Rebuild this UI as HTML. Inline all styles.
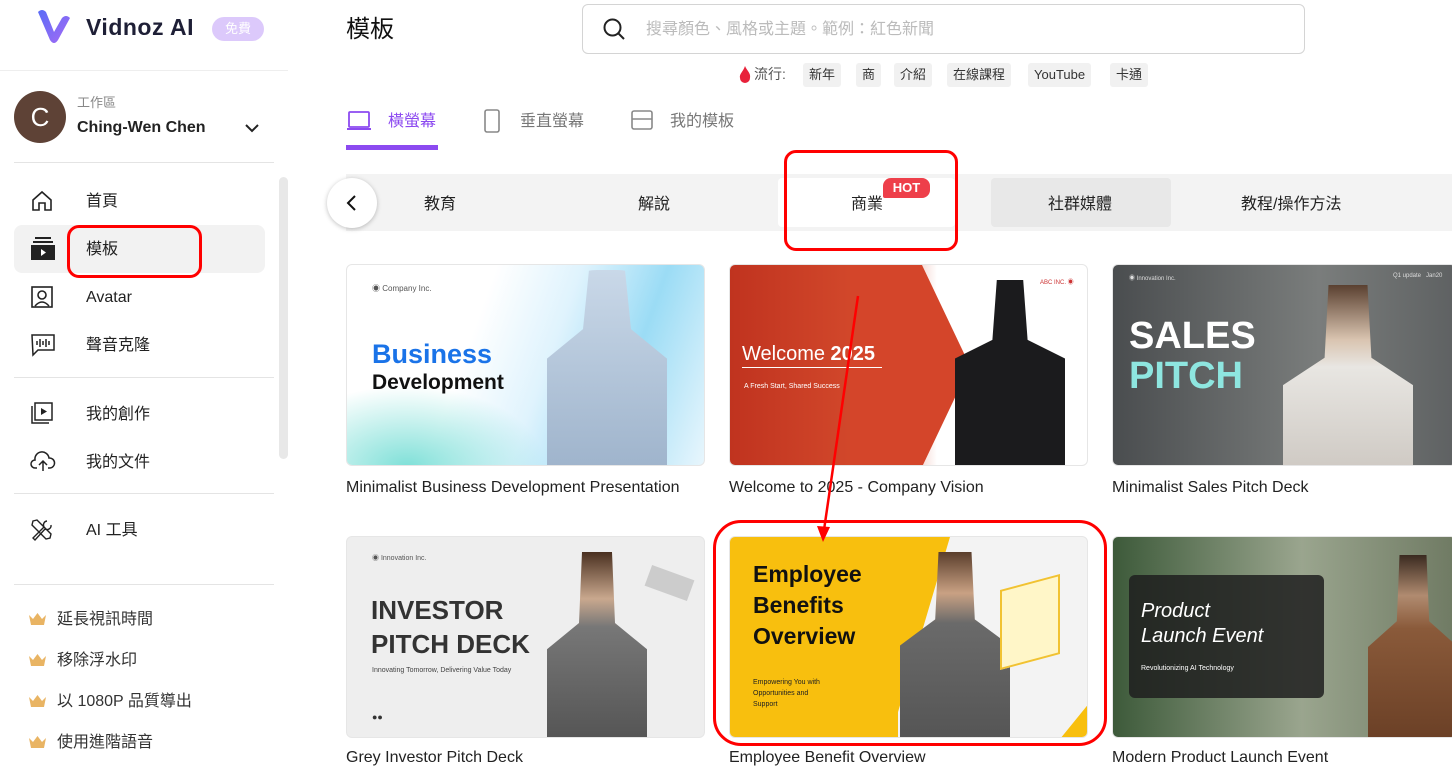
<!DOCTYPE html>
<html><head><meta charset="utf-8"><style>
*{margin:0;padding:0;box-sizing:border-box}
body{width:1452px;height:762px;overflow:hidden;background:#fff;font-family:"Liberation Sans","Noto Sans CJK TC",sans-serif;color:#222;position:relative}
.a{position:absolute}
.nav{position:absolute;left:86px;font-size:16px;color:#222}
.ic{position:absolute;left:30px}
.hr{position:absolute;left:14px;width:260px;height:1px;background:#e4e4e4}
.crown{position:absolute;left:29px;width:17px;height:12px}
.prem{position:absolute;left:57px;font-size:16px;color:#333}
.chip{position:absolute;top:63px;height:24px;background:#f1f1f1;border-radius:3px;font-size:13px;color:#333;line-height:24px;padding:0 6px}
.card{position:absolute;width:359px;height:202px;border-radius:6px;overflow:hidden;border:1px solid #e6e6e6}
.ttl{position:absolute;font-size:16px;color:#222}
.tab{position:absolute;top:190px;font-size:16px;color:#222}
.redbox{position:absolute;border:3px solid #f00;border-radius:12px}
</style></head><body>
<!-- sidebar -->
<svg class="a" style="left:36px;top:8px" width="36" height="38" viewBox="0 0 36 38"><defs><linearGradient id="lg" x1="0" y1="0" x2="1" y2="1"><stop offset="0" stop-color="#5a6cf6"/><stop offset="1" stop-color="#a56bf5"/></linearGradient></defs><path d="M2 4 L14 32 Q18 38 22 32 L34 10 Q30 6 26 10 L18 24 L10 4 Q6 0 2 4Z" fill="url(#lg)"/></svg>
<div class="a" style="left:86px;top:14px;font-size:23px;font-weight:bold;color:#1e1f36;letter-spacing:0.5px">Vidnoz AI</div>
<div class="a" style="left:212px;top:17px;width:52px;height:24px;border-radius:12px;background:#dcc9fb;color:#fff;font-size:13px;text-align:center;line-height:24px">免費</div>
<div class="a" style="left:0;top:70px;width:288px;height:1px;background:#eee"></div>
<div class="a" style="left:14px;top:91px;width:52px;height:52px;border-radius:50%;background:#5e4236;color:#fff;font-size:26px;text-align:center;line-height:52px">C</div>
<div class="a" style="left:77px;top:92px;font-size:13px;color:#888">工作區</div>
<div class="a" style="left:77px;top:119px;font-size:16px;font-weight:bold;color:#222">Ching-Wen Chen</div>
<svg class="a" style="left:244px;top:122px" width="16" height="12"><path d="M2 3 L8 9 L14 3" stroke="#222" stroke-width="2" fill="none"/></svg>
<div class="hr" style="top:162px"></div>
<div class="a" style="left:279px;top:177px;width:9px;height:282px;border-radius:5px;background:#e8e8e8"></div>
<svg class="ic" style="top:189px" width="24" height="24"><path d="M3 11 L12 3 L21 11 V21 H15 V14 H9 V21 H3Z" stroke="#222" stroke-width="1.6" fill="none"/></svg>
<div class="nav" style="top:187px">首頁</div>
<div class="a" style="left:14px;top:225px;width:251px;height:48px;border-radius:8px;background:#f2f2f2"></div>
<svg class="ic" style="top:236px" width="26" height="26"><rect x="5" y="1" width="16" height="2" fill="#222"/><rect x="3" y="5" width="20" height="2" fill="#222"/><rect x="1" y="9" width="24" height="15" fill="#222"/><path d="M11 13 L16 16.5 L11 20Z" fill="#fff"/></svg>
<div class="nav" style="top:235px">模板</div>
<svg class="ic" style="top:285px" width="24" height="24"><rect x="2" y="2" width="20" height="20" stroke="#222" stroke-width="1.6" fill="none"/><circle cx="12" cy="10" r="4" stroke="#222" stroke-width="1.6" fill="none"/><path d="M5 21 Q12 13 19 21" stroke="#222" stroke-width="1.6" fill="none"/></svg>
<div class="nav" style="top:289px">Avatar</div>
<svg class="ic" style="top:333px" width="26" height="24"><path d="M2 2 H24 V17 H8 L3 22 Z" stroke="#222" stroke-width="1.5" fill="none"/><path d="M7 8v4M10 6v8M13 8v4M16 6v8M19 8v4" stroke="#222" stroke-width="1.5"/></svg>
<div class="nav" style="top:331px">聲音克隆</div>
<div class="hr" style="top:377px"></div>
<svg class="ic" style="top:401px" width="24" height="24"><rect x="5" y="2" width="17" height="17" stroke="#222" stroke-width="1.5" fill="none"/><path d="M2 5 V22 H19" stroke="#222" stroke-width="1.5" fill="none"/><path d="M11 7 L17 10.5 L11 14Z" fill="#222"/></svg>
<div class="nav" style="top:400px">我的創作</div>
<svg class="ic" style="top:449px" width="26" height="24"><path d="M7 19 H5 A4 4 0 0 1 5 11 A7 7 0 0 1 19 9 A5 5 0 0 1 20 19 H18" stroke="#222" stroke-width="1.5" fill="none"/><path d="M13 22 V12 M9 16 L13 12 L17 16" stroke="#222" stroke-width="1.5" fill="none"/></svg>
<div class="nav" style="top:448px">我的文件</div>
<div class="hr" style="top:493px"></div>
<svg class="ic" style="top:518px" width="24" height="24"><path d="M3 3 L7 2 L21 16 L20 20 L16 21 L2 7 Z M17 3 A4 4 0 0 0 14 9 L3 20 L5 22 L15 11 A4 4 0 0 0 21 7" stroke="#222" stroke-width="1.4" fill="none"/></svg>
<div class="nav" style="top:516px">AI 工具</div>
<div class="hr" style="top:584px"></div>
<svg class="crown" style="top:613px" viewBox="0 0 17 12"><path d="M0 2 L4 6 L8.5 0 L13 6 L17 2 L15 12 H2Z" fill="#e9b463"/></svg>
<div class="prem" style="top:605px">延長視訊時間</div>
<svg class="crown" style="top:654px" viewBox="0 0 17 12"><path d="M0 2 L4 6 L8.5 0 L13 6 L17 2 L15 12 H2Z" fill="#e9b463"/></svg>
<div class="prem" style="top:646px">移除浮水印</div>
<svg class="crown" style="top:695px" viewBox="0 0 17 12"><path d="M0 2 L4 6 L8.5 0 L13 6 L17 2 L15 12 H2Z" fill="#e9b463"/></svg>
<div class="prem" style="top:687px">以 1080P 品質導出</div>
<svg class="crown" style="top:736px" viewBox="0 0 17 12"><path d="M0 2 L4 6 L8.5 0 L13 6 L17 2 L15 12 H2Z" fill="#e9b463"/></svg>
<div class="prem" style="top:728px">使用進階語音</div>
<div class="redbox" style="left:67px;top:225px;width:135px;height:53px"></div>

<!-- header -->
<div class="a" style="left:346px;top:9px;font-size:24px;color:#111">模板</div>
<div class="a" style="left:582px;top:4px;width:723px;height:50px;border:1px solid #d4d4d4;border-radius:6px"></div>
<svg class="a" style="left:602px;top:17px" width="24" height="24"><circle cx="10.5" cy="10.5" r="8" stroke="#222" stroke-width="2" fill="none"/><path d="M16.5 16.5 L22 22" stroke="#222" stroke-width="2"/></svg>
<div class="a" style="left:646px;top:15px;font-size:16px;color:#bbb">搜尋顏色、風格或主題。範例：紅色新聞</div>
<svg class="a" style="left:739px;top:66px" width="12" height="18"><path d="M6 0 C8 5 12 7 11 12 A5 5 0 0 1 1 12 C0 8 4 6 6 0Z" fill="#e8213a"/></svg>
<div class="a" style="left:754px;top:64px;font-size:14px;color:#555">流行:</div>
<div class="chip" style="left:803px">新年</div>
<div class="chip" style="left:856px">商</div>
<div class="chip" style="left:894px">介紹</div>
<div class="chip" style="left:947px">在線課程</div>
<div class="chip" style="left:1028px">YouTube</div>
<div class="chip" style="left:1110px">卡通</div>
<svg class="a" style="left:346px;top:110px" width="26" height="22"><rect x="3" y="2" width="20" height="15" stroke="#8c4af0" stroke-width="1.8" fill="none" rx="1"/><path d="M1 19 H25" stroke="#8c4af0" stroke-width="2"/></svg>
<div class="a" style="left:388px;top:107px;font-size:16px;color:#8c4af0">橫螢幕</div>
<div class="a" style="left:346px;top:145px;width:92px;height:5px;background:#8c4af0"></div>
<svg class="a" style="left:482px;top:108px" width="20" height="26"><rect x="3" y="2" width="14" height="22" rx="2" stroke="#888" stroke-width="1.6" fill="none"/></svg>
<div class="a" style="left:520px;top:107px;font-size:16px;color:#777">垂直螢幕</div>
<svg class="a" style="left:630px;top:109px" width="24" height="22"><rect x="2" y="2" width="20" height="18" rx="2" stroke="#888" stroke-width="1.6" fill="none"/><path d="M2 10 H22" stroke="#888" stroke-width="1.6"/></svg>
<div class="a" style="left:670px;top:107px;font-size:16px;color:#777">我的模板</div>

<!-- category tabs -->
<div class="a" style="left:346px;top:174px;width:1106px;height:57px;background:#f3f3f3"></div>
<div class="a" style="left:778px;top:178px;width:177px;height:49px;background:#fff;border-radius:4px"></div>
<div class="a" style="left:991px;top:178px;width:180px;height:49px;background:#e8e8e8;border-radius:4px"></div>
<div class="a" style="left:327px;top:178px;width:50px;height:50px;border-radius:50%;background:#fff;box-shadow:0 1px 5px rgba(0,0,0,.25)"></div>
<svg class="a" style="left:344px;top:194px" width="14" height="18"><path d="M11 2 L4 9 L11 16" stroke="#111" stroke-width="2" fill="none"/></svg>
<div class="tab" style="left:424px">教育</div>
<div class="tab" style="left:638px">解說</div>
<div class="tab" style="left:851px">商業</div>
<div class="a" style="left:883px;top:178px;width:47px;height:20px;background:#ee3f4a;border-radius:8px 8px 8px 2px;color:#fff;font-size:13px;font-weight:bold;text-align:center;line-height:20px">HOT</div>
<div class="tab" style="left:1048px">社群媒體</div>
<div class="tab" style="left:1241px">教程/操作方法</div>
<div class="redbox" style="left:784px;top:150px;width:174px;height:101px"></div>

<!-- cards row 1 -->
<div class="card" style="left:346px;top:264px;background:linear-gradient(110deg,#fff 0%,#fff 35%,#dff3fd 55%,#9bdcf5 75%,#e8f6fd 100%)">
 <div class="a" style="left:0;top:120px;width:200px;height:82px;background:radial-gradient(ellipse at 30% 100%,#7fe0d8 0%,rgba(255,255,255,0) 70%)"></div>
 <div class="a" style="left:25px;top:18px;font-size:8px;color:#555">◉ Company Inc.</div>
 <div class="a" style="left:25px;top:74px;font-size:27px;font-weight:bold;color:#1a73e8">Business</div>
 <div class="a" style="left:25px;top:106px;font-size:21px;font-weight:bold;color:#111">Development</div>
 <div class="a" style="left:200px;top:5px;width:120px;height:197px;background:linear-gradient(#c9d8e8,#9fb4cc);border-radius:50px 50px 0 0;clip-path:polygon(35% 0,65% 0,70% 30%,100% 45%,100% 100%,0 100%,0 45%,30% 30%)"></div>
</div>
<div class="ttl" style="left:346px;top:479px">Minimalist Business Development Presentation</div>
<div class="card" style="left:729px;top:264px;background:linear-gradient(90deg,#c0331f 0%,#d2482b 35%,#fff 58%,#fff 100%)">
 <div class="a" style="left:120px;top:0;width:120px;height:202px;background:#d4452a;clip-path:polygon(0 0,60% 0,100% 50%,60% 100%,0 100%)"></div>
 <div class="a" style="left:12px;top:78px;font-size:20px;color:#fff">Welcome <b>2025</b></div>
 <div class="a" style="left:12px;top:102px;width:140px;height:1px;background:#fff"></div>
 <div class="a" style="left:14px;top:118px;font-size:7px;color:#fff">A Fresh Start, Shared Success</div>
 <div class="a" style="left:310px;top:12px;font-size:6px;color:#c33">ABC INC. ◉</div>
 <div class="a" style="left:225px;top:15px;width:110px;height:187px;background:#1b1b1d;clip-path:polygon(38% 0,62% 0,66% 32%,100% 42%,100% 100%,0 100%,0 42%,34% 32%)"></div>
</div>
<div class="ttl" style="left:729px;top:479px">Welcome to 2025 - Company Vision</div>
<div class="card" style="left:1112px;top:264px;width:345px;background:linear-gradient(90deg,#4a4d4f,#7a7d7c 60%,#5e6162)">
 <div class="a" style="left:16px;top:8px;font-size:6px;color:#ddd">◉ Innovation Inc.</div>
 <div class="a" style="left:280px;top:8px;font-size:6px;color:#ddd">Q1 update &nbsp; Jan20</div>
 <div class="a" style="left:16px;top:50px;font-size:38px;font-weight:bold;color:#fff">SALES</div>
 <div class="a" style="left:16px;top:90px;font-size:38px;font-weight:bold;color:#8ee6e0">PITCH</div>
 <div class="a" style="left:170px;top:20px;width:130px;height:182px;background:linear-gradient(#5a4030 0,#d9c4b0 30%,#e8e6e2 45%,#cfcac4 100%);clip-path:polygon(35% 0,65% 0,68% 40%,100% 55%,100% 100%,0 100%,0 55%,32% 40%)"></div>
</div>
<div class="ttl" style="left:1112px;top:479px">Minimalist Sales Pitch Deck</div>

<!-- cards row 2 -->
<div class="card" style="left:346px;top:536px;background:#eeeeee">
 <div class="a" style="left:25px;top:16px;font-size:7px;color:#555">◉ Innovation Inc.</div>
 <div class="a" style="left:24px;top:58px;font-size:26px;font-weight:bold;color:#333">INVESTOR</div>
 <div class="a" style="left:24px;top:92px;font-size:26px;font-weight:bold;color:#333">PITCH DECK</div>
 <div class="a" style="left:25px;top:130px;font-size:7px;color:#444">Innovating Tomorrow, Delivering Value Today</div>
 <div class="a" style="left:25px;top:175px;font-size:9px;color:#333">●●</div>
 <div class="a" style="left:200px;top:15px;width:100px;height:187px;background:linear-gradient(#4a3020 0,#c9a88e 25%,#777 40%,#555 100%);clip-path:polygon(35% 0,65% 0,68% 38%,100% 52%,100% 100%,0 100%,0 52%,32% 38%)"></div>
 <div class="a" style="left:300px;top:35px;width:45px;height:22px;background:#ccc;transform:rotate(20deg)"></div>
</div>
<div class="ttl" style="left:346px;top:749px">Grey Investor Pitch Deck</div>
<div class="card" style="left:729px;top:536px;background:linear-gradient(90deg,#f8bf0e 0,#f8bf0e 47%,#f3f3f3 47%)">
 <div class="a" style="left:140px;top:0;width:80px;height:202px;background:#f8bf0e;clip-path:polygon(0 0,100% 0,25% 100%,0 100%)"></div>
 <div class="a" style="left:23px;top:22px;font-size:23px;font-weight:bold;color:#111;line-height:31px">Employee<br>Benefits<br>Overview</div>
 <div class="a" style="left:23px;top:140px;font-size:7px;color:#222;line-height:11px">Empowering You with<br>Opportunities and<br>Support</div>
 <div class="a" style="left:170px;top:15px;width:110px;height:187px;background:linear-gradient(#5a3e2c 0,#c9a183 22%,#6a6a6a 38%,#555 100%);clip-path:polygon(35% 0,65% 0,68% 36%,100% 50%,100% 100%,0 100%,0 50%,32% 36%)"></div>
 <div class="a" style="left:270px;top:45px;width:60px;height:80px;background:#fff6c8;border:2px solid #f1c232;transform:skewY(-15deg)"></div>
 <div class="a" style="left:330px;top:165px;width:30px;height:37px;background:#f8bf0e;clip-path:polygon(100% 0,100% 100%,0 100%)"></div>
</div>
<div class="ttl" style="left:729px;top:749px">Employee Benefit Overview</div>
<div class="card" style="left:1112px;top:536px;width:345px;background:linear-gradient(90deg,#3d5a3a,#9aa58e 55%,#6f7a63)">
 <div class="a" style="left:16px;top:38px;width:195px;height:123px;background:rgba(30,30,30,.85);border-radius:6px"></div>
 <div class="a" style="left:28px;top:62px;font-size:20px;color:#fff;font-style:italic;line-height:25px">Product<br>Launch Event</div>
 <div class="a" style="left:28px;top:128px;font-size:7px;color:#fff">Revolutionizing AI Technology</div>
 <div class="a" style="left:255px;top:18px;width:90px;height:184px;background:linear-gradient(#3a2a20 0,#b08b70 22%,#8a5a3a 40%,#6b4026 100%);clip-path:polygon(35% 0,65% 0,68% 36%,100% 50%,100% 100%,0 100%,0 50%,32% 36%)"></div>
</div>
<div class="ttl" style="left:1112px;top:749px">Modern Product Launch Event</div>

<div class="redbox" style="left:713px;top:520px;width:394px;height:226px;border-radius:28px"></div>
<svg class="a" style="left:0;top:0" width="1452" height="762"><path d="M858 296 L824 530" stroke="#f00" stroke-width="2.5"/><path d="M817 526 L823 542 L830 527Z" fill="#f00"/></svg>
</body></html>
